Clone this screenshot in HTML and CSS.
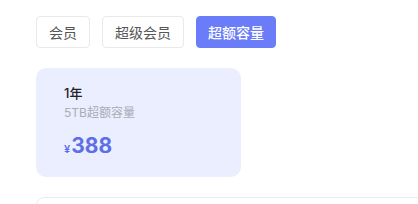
FILE: index.html
```html
<!DOCTYPE html>
<html lang="zh">
<head>
<meta charset="utf-8">
<link rel="stylesheet" href="styles.css">
</head>
<body>
<div class="page">
  <div class="tabs">
    <div class="tab">会员</div>
    <div class="tab">超级会员</div>
    <div class="tab active">超额容量</div>
  </div>
  <div class="card">
    <div class="title">1年</div>
    <div class="sub">5TB超额容量</div>
    <div class="price"><span class="yen">¥</span><span class="num">388</span></div>
  </div>
  <div class="box"></div>
</div>
</body>
</html>
```
FILE: styles.css
```css
html, body {
  margin: 0;
  padding: 0;
  background: #fff;
}
body {
  font-family: Inter, "Noto Sans CJK SC", sans-serif;
}
.page {
  width: 418px;
  height: 204px;
  box-sizing: border-box;
  overflow: hidden;
  padding: 16px 0 0 36px;
  display: flex;
  flex-direction: column;
}
.tabs {
  display: flex;
  gap: 12px;
}
.tab {
  height: 32px;
  box-sizing: border-box;
  padding: 0 12px;
  border: 1px solid #e9e9e9;
  border-radius: 4px;
  font-size: 14px;
  color: #555;
  display: flex;
  align-items: center;
  justify-content: center;
}
.tab.active {
  background: #6a7cf8;
  border-color: #6a7cf8;
  color: #fff;
  font-weight: 500;
  padding: 0 11px;
}
.card {
  flex: none;
  margin-top: 20px;
  width: 205px;
  height: 109px;
  box-sizing: border-box;
  background: #ebeefe;
  border-radius: 10px;
  padding: 15px 28px 0;
}
.title {
  font-size: 13px;
  line-height: 20px;
  font-weight: 500;
  color: #222;
}
.sub {
  font-size: 12px;
  line-height: 17px;
  color: #a9abb5;
  margin-top: 1px;
}
.price {
  margin-top: 12px;
  color: #5d6fe8;
  display: flex;
  align-items: baseline;
}
.yen {
  font-size: 11px;
  font-weight: 600;
  margin-right: 1px;
}
.num {
  font-size: 21px;
  line-height: 26px;
  font-weight: 700;
}
.box {
  flex: none;
  margin-top: 20px;
  width: 420px;
  height: 40px;
  border: 1px solid #ececec;
  border-radius: 8px;
}
```
